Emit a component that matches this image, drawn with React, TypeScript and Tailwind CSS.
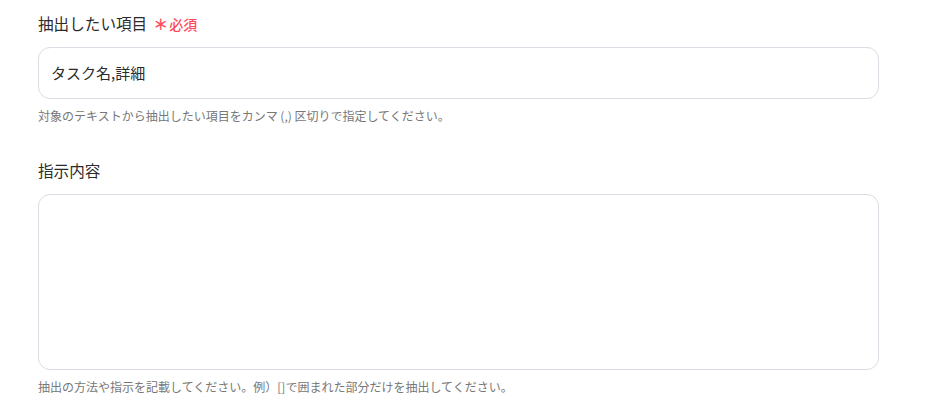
export default function App() {
  return (
    <main
      className="min-h-screen bg-white pl-[38px] pt-[13px] text-[#333]"
      style={{ fontFamily: '"Noto Sans CJK JP", "Noto Sans", sans-serif' }}
    >
      <div className="w-[841px]">
        <div className="flex items-center gap-[6px] h-[22px]">
          <span className="text-[15.6px] text-[#2b2b2b]">抽出したい項目</span>
          <span className="flex items-center text-[14px] font-medium text-[#ff4b5c]">
            <span className="text-[15px] font-bold mr-[1px]">＊</span>必須
          </span>
        </div>
        <div className="mt-[12px] h-[52px] rounded-[12px] border border-[#dcdce4] px-[12px] flex items-center">
          <span className="text-[15px] text-[#2b2b2b]">タスク名,詳細</span>
        </div>
        <p className="mt-[8px] text-[12px] text-[#777]">
          対象のテキストから抽出したい項目をカンマ (,) 区切りで指定してください。
        </p>

        <div className="mt-[35px] h-[22px] flex items-center">
          <span className="text-[15.6px] text-[#2b2b2b]">指示内容</span>
        </div>
        <div className="mt-[12px] h-[176px] rounded-[12px] border border-[#dcdce4]" />
        <p className="mt-[8px] text-[12px] text-[#777]">
          抽出の方法や指示を記載してください。例）[]で囲まれた部分だけを抽出してください。
        </p>
      </div>
    </main>
  );
}
